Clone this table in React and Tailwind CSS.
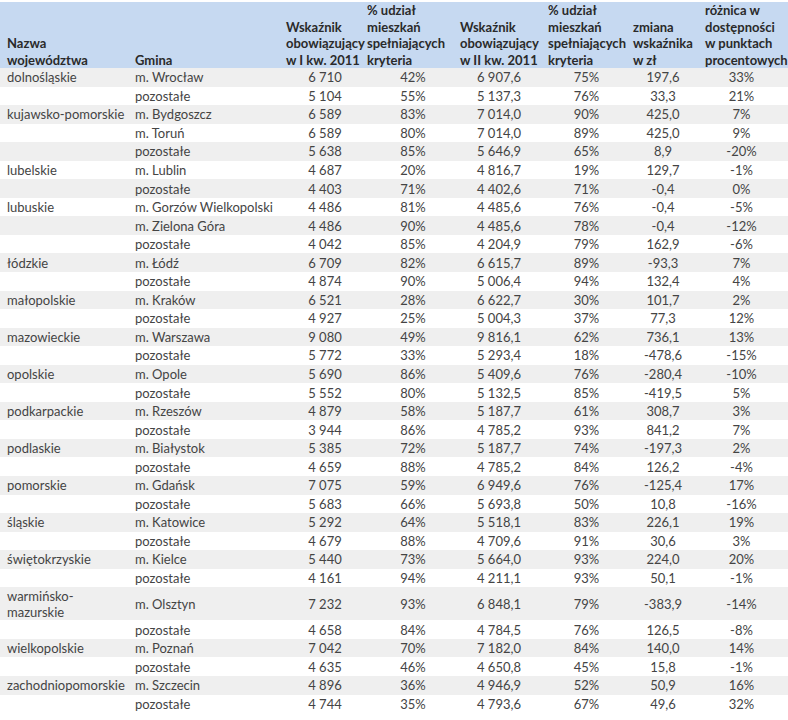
import React from "react";

const rows = [
  ["dolnośląskie", "m. Wrocław", "6 710", "42%", "6 907,6", "75%", "197,6", "33%"],
  ["", "pozostałe", "5 104", "55%", "5 137,3", "76%", "33,3", "21%"],
  ["kujawsko-pomorskie", "m. Bydgoszcz", "6 589", "83%", "7 014,0", "90%", "425,0", "7%"],
  ["", "m. Toruń", "6 589", "80%", "7 014,0", "89%", "425,0", "9%"],
  ["", "pozostałe", "5 638", "85%", "5 646,9", "65%", "8,9", "-20%"],
  ["lubelskie", "m. Lublin", "4 687", "20%", "4 816,7", "19%", "129,7", "-1%"],
  ["", "pozostałe", "4 403", "71%", "4 402,6", "71%", "-0,4", "0%"],
  ["lubuskie", "m. Gorzów Wielkopolski", "4 486", "81%", "4 485,6", "76%", "-0,4", "-5%"],
  ["", "m. Zielona Góra", "4 486", "90%", "4 485,6", "78%", "-0,4", "-12%"],
  ["", "pozostałe", "4 042", "85%", "4 204,9", "79%", "162,9", "-6%"],
  ["łódzkie", "m. Łódź", "6 709", "82%", "6 615,7", "89%", "-93,3", "7%"],
  ["", "pozostałe", "4 874", "90%", "5 006,4", "94%", "132,4", "4%"],
  ["małopolskie", "m. Kraków", "6 521", "28%", "6 622,7", "30%", "101,7", "2%"],
  ["", "pozostałe", "4 927", "25%", "5 004,3", "37%", "77,3", "12%"],
  ["mazowieckie", "m. Warszawa", "9 080", "49%", "9 816,1", "62%", "736,1", "13%"],
  ["", "pozostałe", "5 772", "33%", "5 293,4", "18%", "-478,6", "-15%"],
  ["opolskie", "m. Opole", "5 690", "86%", "5 409,6", "76%", "-280,4", "-10%"],
  ["", "pozostałe", "5 552", "80%", "5 132,5", "85%", "-419,5", "5%"],
  ["podkarpackie", "m. Rzeszów", "4 879", "58%", "5 187,7", "61%", "308,7", "3%"],
  ["", "pozostałe", "3 944", "86%", "4 785,2", "93%", "841,2", "7%"],
  ["podlaskie", "m. Białystok", "5 385", "72%", "5 187,7", "74%", "-197,3", "2%"],
  ["", "pozostałe", "4 659", "88%", "4 785,2", "84%", "126,2", "-4%"],
  ["pomorskie", "m. Gdańsk", "7 075", "59%", "6 949,6", "76%", "-125,4", "17%"],
  ["", "pozostałe", "5 683", "66%", "5 693,8", "50%", "10,8", "-16%"],
  ["śląskie", "m. Katowice", "5 292", "64%", "5 518,1", "83%", "226,1", "19%"],
  ["", "pozostałe", "4 679", "88%", "4 709,6", "91%", "30,6", "3%"],
  ["świętokrzyskie", "m. Kielce", "5 440", "73%", "5 664,0", "93%", "224,0", "20%"],
  ["", "pozostałe", "4 161", "94%", "4 211,1", "93%", "50,1", "-1%"],
  ["warmińsko-\nmazurskie", "m. Olsztyn", "7 232", "93%", "6 848,1", "79%", "-383,9", "-14%"],
  ["", "pozostałe", "4 658", "84%", "4 784,5", "76%", "126,5", "-8%"],
  ["wielkopolskie", "m. Poznań", "7 042", "70%", "7 182,0", "84%", "140,0", "14%"],
  ["", "pozostałe", "4 635", "46%", "4 650,8", "45%", "15,8", "-1%"],
  ["zachodniopomorskie", "m. Szczecin", "4 896", "36%", "4 946,9", "52%", "50,9", "16%"],
  ["", "pozostałe", "4 744", "35%", "4 793,6", "67%", "49,6", "32%"],
];

const headers = [
  ["Nazwa", "województwa"],
  ["Gmina"],
  ["Wskaźnik", "obowiązujący", "w I kw. 2011"],
  ["% udział", "mieszkań", "spełniających", "kryteria"],
  ["Wskaźnik", "obowiązujący", "w II kw. 2011"],
  ["% udział", "mieszkań", "spełniających", "kryteria"],
  ["zmiana", "wskaźnika", "w zł"],
  ["różnica w", "dostępności", "w punktach", "procentowych"],
];

const grid = "grid grid-cols-[128px_151px_81px_93px_88px_85px_72px_90px]";
const dCls = [
  "pl-[7px] text-left",
  "pl-[7px] text-left",
  "pl-[11px] text-center",
  "pl-[13px] text-center",
  "pl-[4px] text-center",
  "pl-[6px] text-center",
  "pl-[2px] text-center",
  "pr-[3px] text-center",
];

export default function App() {
  return (
    <div
      className="w-[788px] h-[720px] bg-white pt-[2px] overflow-hidden"
      style={{ fontFamily: "Lato, 'Open Sans', sans-serif" }}
    >
      <div className={`${grid} bg-[#c6d9f1] h-[66px] text-[13px] leading-[16.5px] font-bold text-[#2a2a2a]`}>
        {headers.map((h, i) => (
          <div key={i} className="flex flex-col justify-end pl-[7px]">
            {h.map((l, j) => (
              <div key={j} className="whitespace-nowrap">{l}</div>
            ))}
          </div>
        ))}
      </div>
      <div className="text-[13px] text-[#444444]">
        {rows.map((r, i) => {
          const dbl = r[0].includes("\n");
          return (
            <div
              key={i}
              className={`${grid} ${dbl ? "h-[33px]" : "h-[18.55px]"} ${i % 2 === 0 ? "bg-[#efefef]" : "bg-white"}`}
            >
              {r.map((c, j) => (
                <div key={j} className={`flex flex-col justify-center whitespace-nowrap ${dCls[j]}`}>
                  {c.split("\n").map((l, k) => (
                    <div key={k} className={dbl ? "leading-[16px]" : "leading-[18px]"}>{l}</div>
                  ))}
                </div>
              ))}
            </div>
          );
        })}
      </div>
    </div>
  );
}
